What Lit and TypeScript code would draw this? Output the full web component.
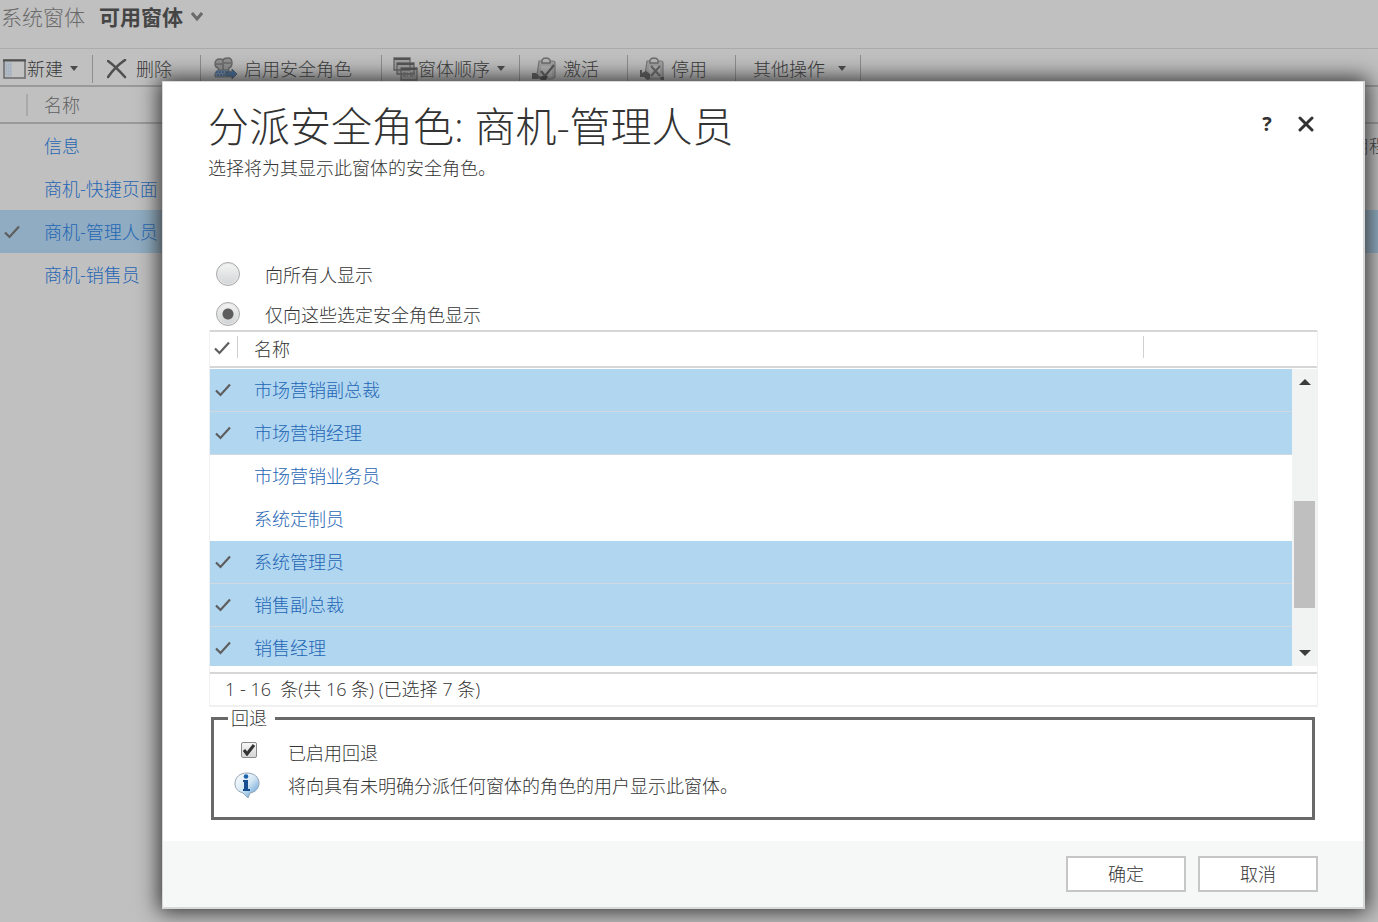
import { LitElement, html, css, svg, nothing } from "lit";
import { customElement, property, state } from "lit/decorators.js";

const sharedText = css`
  * { box-sizing: border-box; }
  button, input { font: inherit; color: inherit; margin: 0; }
  button { background: none; border: 0; padding: 0; cursor: pointer; }
  a { color: #1f66b5; text-decoration: none; }
  svg { display: block; flex: none; }
`;

const check = html`<svg width="16" height="14" viewBox="0 0 16 14" aria-hidden="true">
  <path d="M1 7.5 5.5 12 15 1.5" fill="none" stroke="#5e5e5e" stroke-width="2.2" /></svg>`;

const clipboard = svg`
  <path d="M7 4h14q2 0 2 2v14l-3 2H9l-4-4z" fill="#a2a2a2" stroke="#7a7a7a" stroke-width="1.2"/>
  <path d="M10 6V3q1-2 4-2t4 2v3z" fill="#b8b8b8" stroke="#6c6c6c" stroke-width="1.4"/>
  <path d="M9 9h11v11H9z" fill="#b4b4b4"/>`;

const icons: Record<string, unknown> = {
  form: html`<svg width="24" height="22" viewBox="0 0 24 22" aria-hidden="true">
    <rect x="1" y="2" width="21" height="18" fill="#c3c3c3" stroke="#6f6f6f" stroke-width="1.6"/>
    <path d="M0 2.5h23" stroke="#505050" stroke-width="2"/>
    <rect x="2" y="4" width="7" height="15" fill="#b1bac3"/>
    <path d="M3 7h5M3 10h5M3 13h5M3 16h5" stroke="#8fa6bc" stroke-dasharray="1 1"/></svg>`,
  remove: html`<svg width="23" height="20" viewBox="0 0 23 20" aria-hidden="true">
    <path d="M1 2Q8 7 18 18M18 1Q8 8 1 18" fill="none" stroke="#505050" stroke-width="2.6" stroke-linecap="round"/></svg>`,
  roles: html`<svg width="24" height="24" viewBox="0 0 24 24" aria-hidden="true">
    <path d="M1 7q0-5 5-5 2 0 3 1 1-2 5-2 4 0 4 5 0 4-3 5l-1 3H5l-1-3q-3-1-3-4z" fill="#929292" stroke="#666" stroke-width="1.4"/>
    <path d="M2 7h7m1-1h7M9 3v10" stroke="#6a6a6a" stroke-width="1.6"/>
    <path d="M1 20q-1-7 5-7h8q4 1 4 7z" fill="#75879a" stroke="#5e6a76"/>
    <path d="M2 15h13M3 18h13" stroke="#2f68a8" stroke-width="1.6" stroke-dasharray="2 1"/>
    <path d="M12 15h6v-3l5 5-5 5v-3h-6z" fill="#3b6b9e" stroke="#505a64"/></svg>`,
  order: html`<svg width="25" height="24" viewBox="0 0 25 24" aria-hidden="true">
    <path d="M1 1h16v12H1zM4 6h17v11H4zM8 11h16v12H8z" fill="#a4a4a4" stroke="#666" stroke-width="1.3"/>
    <path d="M1 2h16M4 7h17M8 12h16" stroke="#555" stroke-width="2"/>
    <path d="M10 16h5M10 19h5M17 16h5M17 19h5" stroke="#666" stroke-dasharray="3 1"/></svg>`,
  activate: html`<svg width="25" height="24" viewBox="0 0 25 24" aria-hidden="true">${clipboard}
    <path d="m9 14 4 5 9-11" fill="none" stroke="#585858" stroke-width="2.2"/>
    <path d="M0 16h4l4 4-2 2H0z" fill="#555"/><path d="M7 21l3-2h6l-2 4H9z" fill="#404040"/></svg>`,
  deactivate: html`<svg width="25" height="24" viewBox="0 0 25 24" aria-hidden="true">${clipboard}
    <path d="m11 9 9 10m0-10-9 10" stroke="#686868" stroke-width="2.2"/>
    <path d="M0 13h2v3l4-2 4 3v5l-3 1-3-3H0z" fill="#585858"/><path d="M20 20h4v3h-3z" fill="#555"/></svg>`,
};

@customElement("command-button")
class CommandButton extends LitElement {
  static styles = [sharedText, css`
    :host { display: flex; align-items: center; height: 28px; border-right: 1px solid #8e8e8e; }
    .command { display: flex; align-items: center; white-space: nowrap; height: 28px; }
    .menu { border: 4px solid transparent; border-top: 5px solid #4a4a4a; border-bottom: 0; margin-left: 7px; }
    .spaced { gap: 6px; }
  `];
  @property() icon = "";
  @property() label = "";
  @property({ type: Boolean }) menu = false;
  @property({ type: Boolean }) spaced = false;
  render() {
    return html`<button class="command ${this.spaced ? "spaced" : ""}">
      ${this.icon ? icons[this.icon] : nothing}<span>${this.label}</span>${this.menu ? html`<span class="menu"></span>` : nothing}
    </button>`;
  }
}

@customElement("forms-page")
class FormsPage extends LitElement {
  static styles = [sharedText, css`
    :host { display: block; color: #383838; }
    .switcher { display: flex; align-items: center; height: 48px; padding: 0 0 14px 1px; gap: 14px; font-size: 21px; line-height: 24px; }
    .view { color: #6a6a6a; }
    .current { display: flex; align-items: center; gap: 8px; font-weight: 700; color: #454545; }
    .toolbar { display: flex; align-items: center; height: 39px; padding: 3px 0 0 3px; border-top: 1px solid #ababab; border-bottom: 2px solid #999; }
    .new { padding-right: 14px; }
    .delete { padding: 0 28px 0 14px; }
    .roles { padding: 0 29px 0 13px; }
    .order { padding: 0 14px 0 11px; }
    .state { padding: 0 28px 0 12px; }
    .more { padding: 0 14px 0 17px; }
    .forms { width: 100%; border-collapse: separate; border-spacing: 0; table-layout: fixed; }
    .forms th, .forms td { height: 43px; padding: 0; font-weight: inherit; text-align: left; white-space: nowrap; overflow: hidden; }
    .forms th { height: 37px; border-bottom: 2px solid #999; color: #606060; }
    .mark { width: 44px; }
    .kind { width: 45px; }
    .forms .tick { padding-left: 4px; }
    .divider { display: block; width: 28px; height: 22px; border-right: 2px solid #aaa; }
    .selected { background: #8facc2; }
  `];
  render() {
    const rows = ["信息", "商机-快捷页面", "商机-管理人员", "商机-销售员"];
    return html`
      <nav class="switcher">
        <span class="view">系统窗体</span>
        <button class="current">可用窗体
          <svg width="12" height="10" viewBox="0 0 12 10" aria-hidden="true"><path d="m1 1 5 6 5-6" fill="none" stroke="#6a6a6a" stroke-width="3"/></svg>
        </button>
      </nav>
      <div class="toolbar" role="toolbar" aria-label="窗体">
        <command-button class="new" icon="form" label="新建" menu></command-button>
        <command-button class="delete" icon="remove" label="删除" spaced></command-button>
        <command-button class="roles" icon="roles" label="启用安全角色" spaced></command-button>
        <command-button class="order" icon="order" label="窗体顺序" menu></command-button>
        <command-button class="state" icon="activate" label="激活" spaced></command-button>
        <command-button class="state" icon="deactivate" label="停用" spaced></command-button>
        <command-button class="more" label="其他操作" menu spaced></command-button>
      </div>
      <table class="forms">
        <colgroup><col class="mark"><col><col class="kind"></colgroup>
        <thead><tr><th><span class="divider"></span></th><th>名称</th><th></th></tr></thead>
        <tbody>${rows.map((name, i) => html`<tr class=${i === 2 ? "selected" : ""}>
          <td class="tick">${i === 2 ? check : nothing}</td><td><a href="#">${name}</a></td><td>${i === 0 ? "应用程序" : nothing}</td></tr>`)}
        </tbody>
      </table>`;
  }
}

@customElement("role-dialog")
class RoleDialog extends LitElement {
  static styles = [sharedText, css`
    :host { display: block; background: #fff; color: #333; border: 1px solid #d8d8d8; border-width: 1px 2px 2px 1px; box-shadow: 0 0 20px 3px #333; }
    .main { padding: 14px 45px 21px 45px; }
    .head { display: flex; justify-content: space-between; }
    .title { margin: 0; font-size: 41px; line-height: 60px; font-weight: inherit; white-space: nowrap; }
    .lead { margin: 0; line-height: 24px; }
    .tools { display: flex; gap: 21px; padding: 16px 3px 0 0; height: 40px; align-items: center; }
    .tool { width: 18px; height: 28px; display: grid; place-items: center; font: 700 20px/28px "Open Sans", sans-serif; }
    .choices { display: grid; gap: 10px; padding-top: 80px; margin-left: 8px; }
    .choice { display: flex; align-items: center; gap: 25px; height: 30px; width: max-content; }
    .radio { appearance: none; width: 24px; height: 24px; border: 1px solid #a8a8a8; border-radius: 50%; background: linear-gradient(#f4f4f4, #d2d5d6); margin-bottom: 2px; box-shadow: inset 0 0 0 1px #e7e7e7; }
    .radio:checked { background: radial-gradient(circle, #5d5d5d 0 5px, transparent 6px), linear-gradient(#f4f4f4, #cfd2d3); }
    .grid { border: 1px solid #f0f0f0; border-width: 0 1px 2px; margin-left: 1px; }
    .columns { display: flex; align-items: center; height: 38px; border: 2px solid #d6d6d6; border-width: 2px 0; }
    .all { width: 28px; height: 22px; border-right: 1px solid #d0d0d0; padding: 5px 0 0 4px; margin-bottom: 4px; }
    .heading { flex: 1; padding-left: 16px; }
    .spare { width: 174px; height: 22px; border-left: 1px solid #d0d0d0; margin-bottom: 4px; }
    .body { display: flex; height: 306px; padding: 1px 0 6px; border-bottom: 2px solid #d6d6d6; }
    .scroller { flex: 1; overflow: hidden; }
    .roles { width: 100%; border-collapse: separate; border-spacing: 0; }
    .roles td { height: 43px; padding: 0; border-bottom: 1px solid #fff; }
    .roles .on td { background: #b1d6f0; border-color: #d0d9df; }
    .roles .tick { width: 44px; padding-left: 5px; }
    .scrollbar { width: 25px; background: #f1f3f2; display: flex; flex-direction: column; align-items: center; justify-content: space-between; padding: 10px 0; }
    .up, .down { border: 6px solid transparent; border-top-width: 0; border-bottom: 6px solid #3c3c3c; }
    .down { border-top: 6px solid #3c3c3c; border-bottom-width: 0; }
    .thumb { width: 21px; height: 107px; background: #bfbfbf; margin-top: 73px; }
    .count { height: 31px; line-height: 31px; padding-left: 15px; white-space: pre; }
    .fallback { margin: 0 3px; padding: 7px 0 15px 20px; border: 3px solid #696969; min-width: 0; }
    .fallback legend { padding: 0 8px 0 3px; line-height: 22px; margin-left: -6px; }
    .line { display: flex; align-items: center; height: 33px; gap: 28px; }
    .box { appearance: none; width: 16px; height: 16px; margin: 0 3px 5px 7px; border: 1px solid #8a8a8a; border-radius: 2px; background: linear-gradient(#f7f7f7, #d5d5d5); }
    .ticked { display: grid; }
    .ticked > * { grid-area: 1 / 1; }
    .ticked svg { margin: 2px 0 0 9px; pointer-events: none; z-index: 1; }
    .foot { display: flex; justify-content: flex-end; gap: 12px; padding: 15px 45px; background: #f6f8f8; }
    .action { width: 120px; height: 36px; border: 2px solid #c6c6c6; background: #fff; }
  `];
  @state() private scope = "selected";
  @state() private fallback = true;
  private roles: [string, boolean][] = [
    ["市场营销副总裁", true], ["市场营销经理", true], ["市场营销业务员", false], ["系统定制员", false],
    ["系统管理员", true], ["销售副总裁", true], ["销售经理", true],
  ];
  private choice(value: string, label: string) {
    return html`<label class="choice"><input class="radio" type="radio" name="scope" .checked=${this.scope === value}
      @change=${() => (this.scope = value)}><span>${label}</span></label>`;
  }
  render() {
    return html`
      <div class="main">
        <header class="head">
          <h1 class="title">分派安全角色: 商机-管理人员</h1>
          <div class="tools">
            <button class="tool" aria-label="帮助">?</button>
            <button class="tool" aria-label="关闭"><svg width="16" height="16" viewBox="0 0 16 16"><path d="m2 2 12 12m0-12L2 14" stroke="#333" stroke-width="3" stroke-linecap="round"/></svg></button>
          </div>
        </header>
        <p class="lead">选择将为其显示此窗体的安全角色。</p>
        <div class="choices">${this.choice("all", "向所有人显示")}${this.choice("selected", "仅向这些选定安全角色显示")}</div>
        <section class="grid">
          <div class="columns"><span class="all">${check}</span><span class="heading">名称</span><span class="spare"></span></div>
          <div class="body">
            <div class="scroller"><table class="roles"><tbody>
              ${this.roles.map(([name, on]) => html`<tr class=${on ? "on" : ""}><td class="tick">${on ? check : nothing}</td><td><a href="#">${name}</a></td></tr>`)}
            </tbody></table></div>
            <div class="scrollbar" aria-hidden="true"><span class="up"></span><span class="thumb"></span><span class="down"></span></div>
          </div>
          <div class="count">1 - 16  条(共 16 条) (已选择 7 条)</div>
        </section>
        <fieldset class="fallback">
          <legend>回退</legend>
          <label class="line"><span class="ticked"><input class="box" type="checkbox" .checked=${this.fallback}
            @change=${(e: Event) => (this.fallback = (e.target as HTMLInputElement).checked)}>
            ${this.fallback ? html`<svg width="13" height="12" viewBox="0 0 13 12" aria-hidden="true"><path d="m1 6 3 4 7-9" fill="none" stroke="#333" stroke-width="3"/></svg>` : nothing}
            </span><span>已启用回退</span></label>
          <div class="line">
            <svg width="26" height="27" viewBox="0 0 26 27" aria-hidden="true">
              <defs><linearGradient id="bubble" x2="1" y2="1"><stop stop-color="#fff"/><stop offset=".5" stop-color="#d5e7f5"/><stop offset="1" stop-color="#4b91cd"/></linearGradient></defs>
              <path d="M13 1C6 1 1 5 1 12c0 5 4 8 8 9l5 5 2-5c6-1 9-5 9-10 0-6-5-10-12-10z" fill="url(#bubble)" stroke="#92a5b4"/>
              <circle cx="12" cy="4.500" r="2.300" fill="#1d63ad"/><path d="M9 8h5v9h2v2H9v-2h1v-7H9z" fill="#174f91"/></svg>
            <span>将向具有未明确分派任何窗体的角色的用户显示此窗体。</span>
          </div>
        </fieldset>
      </div>
      <footer class="foot"><button class="action">确定</button><button class="action">取消</button></footer>`;
  }
}

@customElement("app-root")
class AppRoot extends LitElement {
  static styles = css`
    :host { display: block; position: relative; min-height: 100vh; overflow: hidden; background: #c0c0c0;
      font: 300 18px/24px "Open Sans", "Noto Sans CJK SC", sans-serif; }
    .overlay { position: absolute; inset: 0; padding: 81px 13px 0 162px; }
  `;
  render() {
    return html`<forms-page></forms-page><div class="overlay"><role-dialog role="dialog" aria-modal="true"></role-dialog></div>`;
  }
}
